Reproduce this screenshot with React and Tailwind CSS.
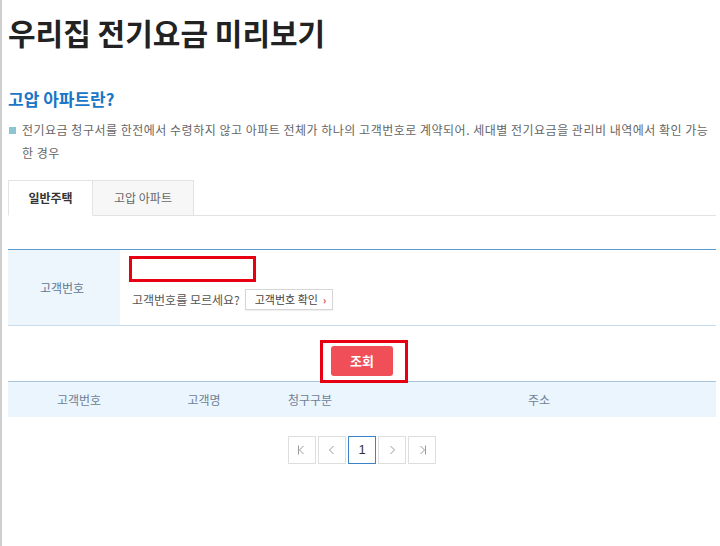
import { useState } from 'react';

const font = { fontFamily: '"Noto Sans CJK KR", "Noto Sans", sans-serif' };

function PageBtn({ children, active }) {
  return (
    <button
      type="button"
      className={`flex h-[28px] w-[28px] items-center justify-center border bg-white text-[13px] ${active ? 'border-[#3d82c4] text-[#333]' : 'border-[#dedede] text-[#999]'}`}
    >
      {children}
    </button>
  );
}

function Chevron({ dir, bar }) {
  const left = dir === 'left';
  return (
    <svg width="12" height="12" viewBox="0 0 12 12" fill="none" stroke="#999" strokeWidth="1">
      {left ? <path d="M7.5 2 L3.5 6 L7.5 10" /> : <path d="M4.5 2 L8.5 6 L4.5 10" />}
      {bar && (left ? <path d="M2.5 1.5 V10.5" /> : <path d="M9.5 1.5 V10.5" />)}
    </svg>
  );
}

export default function App() {
  const [tab, setTab] = useState(0);
  const [custNo, setCustNo] = useState('');

  return (
    <div className="min-h-[546px] border-l-2 border-[#cfcfcf] bg-white pl-[6px] pr-[4px]" style={font}>
      <h1 className="pt-[9px] text-[30px] font-bold leading-[46px] text-[#222]">우리집 전기요금 미리보기</h1>

      <h2 className="mt-[32px] text-[17px] font-bold leading-[24px] text-[#1a76c6]">고압 아파트란?</h2>

      <p className="relative mt-[7px] pl-[14px] -indent-[14px] text-[12px] leading-[23px] tracking-[0.5px] text-[#666]">
        <span className="ml-[1px] mr-[6px] inline-block h-[7px] w-[7px] bg-[#8ec3d3] align-[1px]"></span>
        전기요금 청구서를 한전에서 수령하지 않고 아파트 전체가 하나의 고객번호로 계약되어. 세대별 전기요금을 관리비 내역에서 확인 가능한 경우
      </p>

      <div className="mt-[16px] flex h-[36px] border-b border-[#e3e3e3]">
        <button
          type="button"
          onClick={() => setTab(0)}
          className={`-mb-px w-[85px] border border-[#e3e3e3] text-[12px] ${tab === 0 ? 'border-b-white bg-white font-bold text-[#333]' : 'bg-[#f7f7f7] text-[#666]'}`}
        >
          일반주택
        </button>
        <button
          type="button"
          onClick={() => setTab(1)}
          className={`-mb-px w-[101px] border border-l-0 border-[#e3e3e3] text-[12px] ${tab === 1 ? 'border-b-white bg-white font-bold text-[#333]' : 'bg-[#f7f7f7] text-[#666]'}`}
        >
          고압 아파트
        </button>
      </div>

      <div className="mt-[33px] flex h-[77px] border-t border-b border-t-[#5a9bcd] border-b-[#c6dbec]">
        <div className="flex w-[112px] items-center justify-center bg-[#eef6fd] pr-[4px] text-[12px] text-[#5f7892]">고객번호</div>
        <div className="flex flex-col pl-[9px] pt-[6px]">
          <input
            value={custNo}
            onChange={e => setCustNo(e.target.value)}
            className="h-[26px] w-[127px] border-[3px] border-[#e60012] bg-white px-1 text-[12px] outline-none"
          />
          <div className="mt-[7px] flex items-center text-[12px] text-[#555]">
            <span className="ml-[3px]">고객번호를 모르세요?</span>
            <button
              type="button"
              className="ml-[5px] flex h-[21px] items-center border border-[#d6d6d6] bg-white pl-[9px] pr-[6px] text-[11px] text-[#444] shadow-[0_1px_1px_rgba(0,0,0,0.06)]"
            >
              고객번호 확인
              <span className="ml-[5px] text-[10px] font-bold text-[#e0303a]">›</span>
            </button>
          </div>
        </div>
      </div>

      <div className="mt-[20px] flex justify-center">
        <div className="relative">
          <button type="button" className="relative z-10 h-[30px] w-[62px] rounded-[3px] bg-[#f04f57] text-[13px] font-bold text-white">
            조회
          </button>
          <span className="pointer-events-none absolute -top-[6px] -bottom-[7px] -left-[11px] -right-[15px] z-20 border-[3px] border-[#e60012]"></span>
        </div>
      </div>

      <div className="mt-[5px] grid h-[36px] grid-cols-[142px_108px_104px_1fr] items-center border-t border-[#a9c3d8] bg-[#eaf5fd] text-center text-[12px] text-[#6f8196]">
        <span>고객번호</span>
        <span>고객명</span>
        <span>청구구분</span>
        <span>주소</span>
      </div>

      <div className="mt-[19px] flex justify-center gap-[2px]">
        <PageBtn><Chevron dir="left" bar /></PageBtn>
        <PageBtn><Chevron dir="left" /></PageBtn>
        <PageBtn active><span style={{ fontFamily: '"Liberation Sans", sans-serif' }}>1</span></PageBtn>
        <PageBtn><Chevron dir="right" /></PageBtn>
        <PageBtn><Chevron dir="right" bar /></PageBtn>
      </div>
    </div>
  );
}
